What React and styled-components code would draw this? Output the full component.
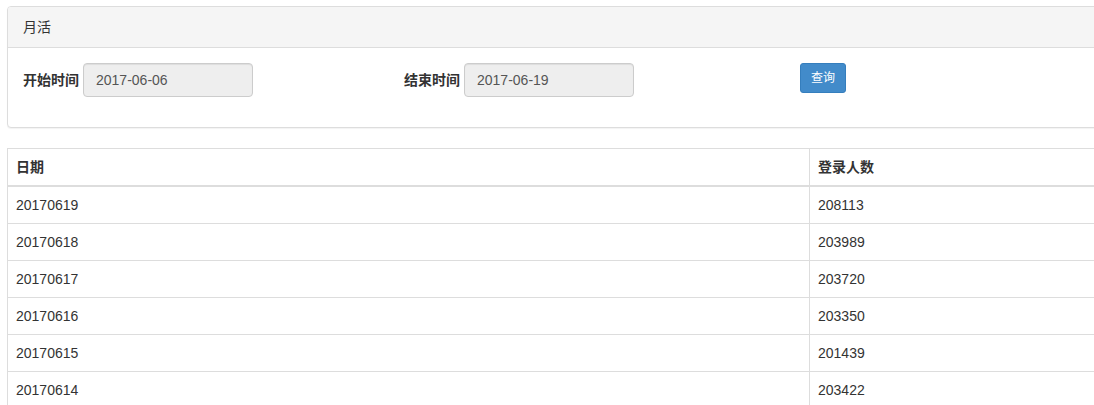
import React from 'react';
import styled, { createGlobalStyle } from 'styled-components';

const GlobalStyle = createGlobalStyle`
  html, body {
    margin: 0;
    padding: 0;
    overflow: hidden;
    background: #fff;
  }
  body {
    font-family: "Liberation Sans", Arial, "Noto Sans CJK SC", sans-serif;
    font-size: 14px;
    line-height: 20px;
    color: #333;
  }
`;

const Page = styled.div`
  padding: 6px 0 0 7px;
  width: 1160px;
`;

const Panel = styled.div`
  border: 1px solid #ddd;
  border-radius: 4px;
  background: #fff;
  margin-bottom: 20px;
  box-shadow: 0 1px 1px rgba(0, 0, 0, 0.05);
`;

const PanelHeading = styled.div`
  background: #f5f5f5;
  border-bottom: 1px solid #ddd;
  padding: 10px 15px;
  border-radius: 3px 3px 0 0;
`;

const PanelBody = styled.div`
  padding: 15px 15px 30px;
  display: flex;
  align-items: flex-start;
`;

const Field = styled.div`
  display: flex;
  align-items: center;
  width: ${p => p.width}px;
  flex-shrink: 0;
`;

const Label = styled.label`
  font-weight: bold;
  margin-right: 4px;
`;

const Input = styled.input`
  width: 170px;
  height: 34px;
  box-sizing: border-box;
  padding: 6px 12px;
  font-family: inherit;
  font-size: 14px;
  color: #555;
  background: #eee;
  border: 1px solid #ccc;
  border-radius: 4px;
  box-shadow: inset 0 1px 1px rgba(0, 0, 0, 0.075);
  outline: none;
`;

const Button = styled.button`
  height: 30px;
  padding: 5px 10px;
  font-family: inherit;
  font-size: 12px;
  line-height: 18px;
  color: #fff;
  background: #428bca;
  border: 1px solid #357ebd;
  border-radius: 3px;
`;

const Table = styled.table`
  width: 1150px;
  border-collapse: collapse;
  border: 1px solid #ddd;
`;

const Th = styled.th`
  text-align: left;
  padding: 8px;
  line-height: 20px;
  border: 1px solid #ddd;
  border-bottom: 2px solid #ddd;
  width: ${p => (p.width ? `${p.width}px` : 'auto')};
`;

const Td = styled.td`
  padding: 8px;
  line-height: 20px;
  border: 1px solid #ddd;
`;

const rows = [
  ['20170619', '208113'],
  ['20170618', '203989'],
  ['20170617', '203720'],
  ['20170616', '203350'],
  ['20170615', '201439'],
  ['20170614', '203422'],
  ['20170613', '202871'],
];

const App = () => {
  return (
    <>
      <GlobalStyle />
      <Page>
        <Panel>
          <PanelHeading>月活</PanelHeading>
          <PanelBody>
            <Field width={381}>
              <Label>开始时间</Label>
              <Input readOnly value="2017-06-06" />
            </Field>
            <Field width={396}>
              <Label>结束时间</Label>
              <Input readOnly value="2017-06-19" />
            </Field>
            <Field width={100}>
              <Button>查询</Button>
            </Field>
          </PanelBody>
        </Panel>
        <Table>
          <thead>
            <tr>
              <Th width={785}>日期</Th>
              <Th>登录人数</Th>
            </tr>
          </thead>
          <tbody>
            {rows.map(r => (
              <tr key={r[0]}>
                <Td>{r[0]}</Td>
                <Td>{r[1]}</Td>
              </tr>
            ))}
          </tbody>
        </Table>
      </Page>
    </>
  );
};

export default App;
